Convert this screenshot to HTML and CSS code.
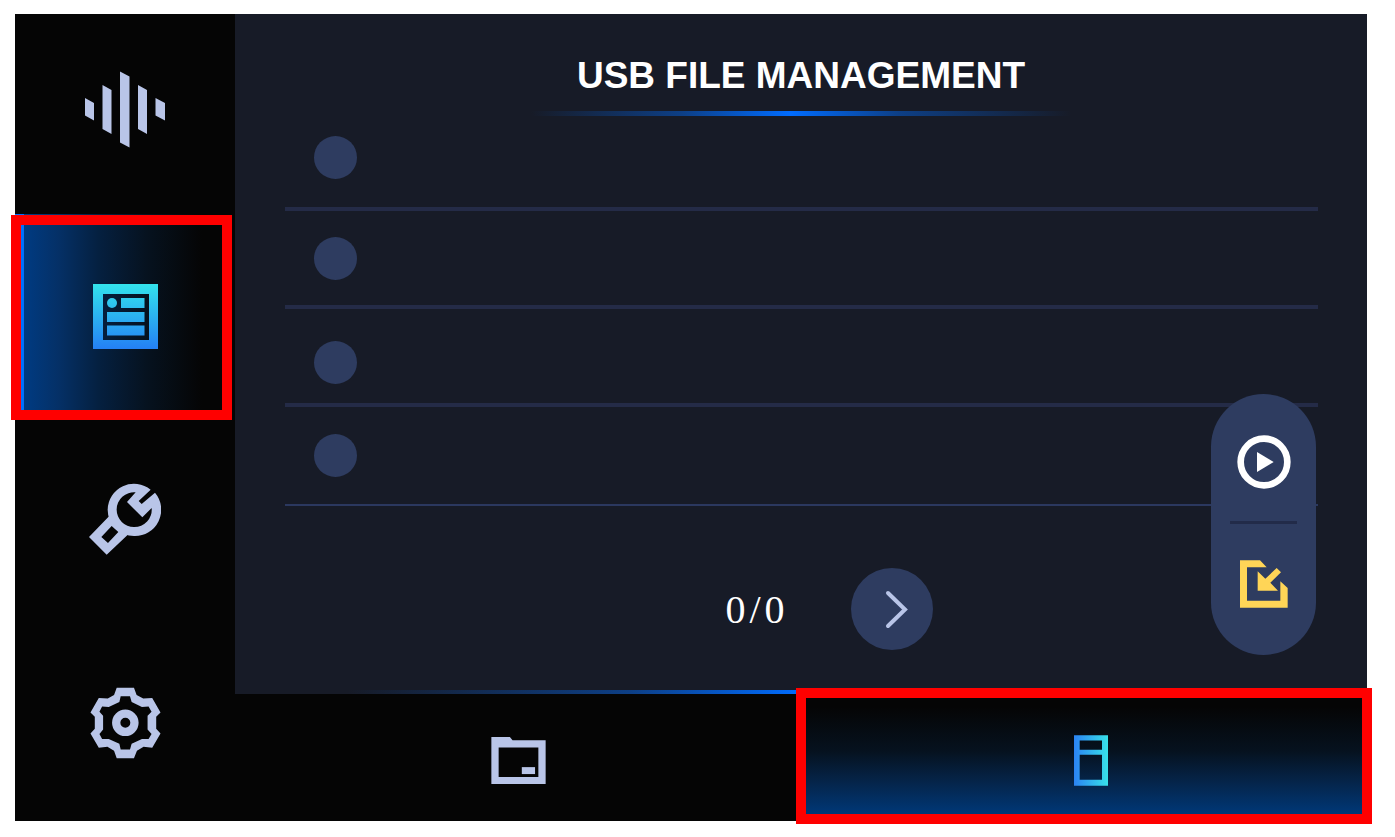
FILE: index.html
```
<!DOCTYPE html>
<html lang="en">
<head>
    <meta charset="UTF-8">
    <meta name="viewport" content="width=device-width, initial-scale=1.0">
    <title>USB File Management</title>
    <link rel="stylesheet" href="styles.css">
</head>
<body>
<div class="device">
    <nav class="sidebar" aria-label="Main">
        <button class="side-tab side-tab-audio" aria-label="Audio">
            <svg width="82" height="78" viewBox="84 71 82 78" fill="currentColor">
                <path d="M85 98l9 5v17.500l-9-5zM102.500 85l9 5v44l-9-5zM120 71.500l9.500 5v71l-9.500-5zM138 85l9 5v44l-9-5zM155.500 98l9.500 5v17.500l-9.500-5z"/>
            </svg>
        </button>
        <button class="side-tab side-tab-active" aria-label="Files">
            <svg width="65" height="65" viewBox="92 283 65 65" fill="url(#listFill)">
                <defs>
                    <linearGradient id="listFill" gradientUnits="userSpaceOnUse" x1="0" y1="283" x2="0" y2="348">
                        <stop offset="0" stop-color="#33e3ec"/>
                        <stop offset="1" stop-color="#2480f5"/>
                    </linearGradient>
                </defs>
                <path fill-rule="evenodd" d="M92 283h65v65H92zM102 293v46h46v-46z"/>
                <circle cx="111" cy="302" r="5"/>
                <path d="M120 297h23.500v10H120zM106 311h37.500v10H106zM106 324.500h37.500v10H106z"/>
            </svg>
            <span class="mark mark-side"></span>
        </button>
        <button class="side-tab" aria-label="Tools">
            <svg width="72" height="72" viewBox="55 68 216 216" fill="currentColor" fill-rule="evenodd">
                <path d="M240 88A79 79 0 0 0 111 148A79 79 0 0 0 190 227A79 79 0 0 0 253 97L213 131L204 122ZM195 96A52 52 0 0 0 138 148A52 52 0 0 0 190 200A52 52 0 0 0 243 143L215 171L169 125Z"/>
                <path d="M118 165L55 230L108 283L173 222ZM123 197L143 215L112 248L92 230Z"/>
            </svg>
        </button>
        <button class="side-tab" aria-label="Settings">
            <svg width="71" height="78" viewBox="58 50 213 235" fill="currentColor" fill-rule="evenodd">
                <path d="M138 67H190L198 89L218 100L245 98L270 142L257 155V191L270 205L245 248L219 245L199 257L190 280H138L130 257L110 245L84 248L59 205L72 191V155L59 142L84 98L111 100L130 89ZM150 93L146 110L114 125L94 124L86 140L97 152V193L86 207L94 222H114L146 236L150 253H178L183 236L214 222H234L243 207L231 193V152L243 140L234 124L214 125L183 110L178 93Z"/>
                <path d="M124 173a40 40 0 1 0 80 0a40 40 0 1 0 -80 0ZM149 173a15 15 0 1 0 30 0a15 15 0 1 0 -30 0Z"/>
            </svg>
        </button>
    </nav>

    <div class="content">
        <main class="panel">
            <h1 class="title">USB FILE MANAGEMENT</h1>
            <div class="title-line"></div>

            <ul class="files">
                <li class="file"><input type="checkbox" class="file-check" aria-label="Select file 1"></li>
                <li class="file"><input type="checkbox" class="file-check" aria-label="Select file 2"></li>
                <li class="file"><input type="checkbox" class="file-check" aria-label="Select file 3"></li>
                <li class="file"><input type="checkbox" class="file-check" aria-label="Select file 4"></li>
            </ul>

            <div class="pager">
                <span class="page-count">0<span class="slash">/</span>0</span>
                <button class="next" aria-label="Next page">
                    <svg width="82" height="82" viewBox="0 0 82 82" fill="none" stroke="#b9c5e8" stroke-width="4" stroke-linecap="round">
                        <path d="M37 25L54 41.500L37 58"/>
                    </svg>
                </button>
            </div>

            <div class="actions">
                <button class="action" aria-label="Play">
                    <svg width="54" height="54" viewBox="141 162 162 162" fill="#ffffff">
                        <circle cx="222" cy="243" r="70" fill="none" stroke="#ffffff" stroke-width="20"/>
                        <path d="M201 213L251 243L201 273Z"/>
                    </svg>
                </button>
                <div class="actions-line"></div>
                <button class="action" aria-label="Import">
                    <svg width="48" height="48" viewBox="152 536 144 144" fill="#ffd557">
                        <path d="M152 537H212L232 558H173V658H273V600L295 620V679H152Z"/>
                        <path d="M205 570L228 592L262 560L275 573L243 604L266 628H205Z"/>
                    </svg>
                </button>
            </div>
        </main>

        <nav class="tabs" aria-label="Storage">
            <button class="tab" aria-label="Internal storage">
                <svg width="55" height="47" viewBox="66 200 164 142" fill="currentColor">
                    <path fill-rule="evenodd" d="M66 200H122L130 210H230V342H66ZM88 232V321H208V232Z"/>
                    <path d="M158 291H198V312H158Z"/>
                </svg>
            </button>
            <button class="tab tab-active" aria-label="USB drive">
                <svg width="34" height="51" viewBox="134 196 102 152" fill="url(#usbFill)">
                    <defs>
                        <linearGradient id="usbFill">
                            <stop offset="0" stop-color="#2b83f4"/>
                            <stop offset="1" stop-color="#38e2ea"/>
                        </linearGradient>
                    </defs>
                    <path fill-rule="evenodd" d="M134 196H236V348H134ZM151 212V240H218V212ZM151 255V330H218V255Z"/>
                </svg>
                <span class="mark mark-tab"></span>
            </button>
        </nav>
    </div>
</div>
</body>
</html>
```
FILE: styles.css
```
* {
    box-sizing: border-box;
}
body {
    margin: 0;
    padding: 14px 28px 16px 15px;
    min-height: 100vh;
    display: flex;
    background-color: #ffffff;
    font-family: "Liberation Sans", Arial, sans-serif;
}
button {
    border: 0;
    padding: 0;
    background: none;
    color: #b9c5e8;
    cursor: pointer;
}
svg {
    display: block;
}
.device {
    flex: 1;
    display: flex;
    background-color: #050505;
}

/* left menu */
.sidebar {
    width: 220px;
    display: grid;
    grid-template-rows: 200fr 204fr 202fr 201fr;
}
.side-tab {
    position: relative;
    display: flex;
    align-items: center;
    justify-content: center;
}
.side-tab-audio {
    padding-bottom: 8px;
}
.side-tab-active {
    background: linear-gradient(to right, #0070ff 9px, #003b82 9px, #053066 20%, #052040 38%, #06121f 60%, #050505 85%);
}

/* red callout frames */
.mark {
    position: absolute;
    border: 10px solid #ff0000;
    pointer-events: none;
}
.mark-side {
    top: 1px;
    right: 3px;
    bottom: -2px;
    left: -4px;
}
.mark-tab {
    top: -6px;
    right: -5px;
    bottom: -3px;
    left: -5px;
}

.content {
    flex: 1;
    display: flex;
    flex-direction: column;
}
.panel {
    position: relative;
    flex: 1;
    padding-top: 38px;
    background-color: #171b27;
}
.title {
    margin: 0;
    font-size: 37px;
    line-height: 48px;
    text-align: center;
    color: #ffffff;
}
.title-line {
    width: 540px;
    height: 5px;
    margin: 11px auto 0;
    background: linear-gradient(to right, #171b27, #0d3f86 28%, #006cff 48%, #0d3f86 68%, #171b27);
}

.files {
    list-style: none;
    margin: 0 49px 0 50px;
    padding: 0;
}
.file {
    display: flex;
    align-items: center;
    height: 98px;
    padding-left: 29px;
    border-bottom: 4px solid #242b47;
}
.file:first-child {
    height: 95px;
    padding-bottom: 8px;
}
.file:nth-child(3) {
    padding-top: 12px;
}
.file:last-child {
    height: 99px;
    border-bottom: 2px solid #2b385f;
}
.file-check {
    appearance: none;
    width: 43px;
    height: 43px;
    margin: 0;
    border-radius: 50%;
    background-color: #2e3c60;
}

.pager {
    display: flex;
    align-items: center;
    justify-content: center;
    gap: 66px;
    padding: 62px 0 40px 56px;
}
.page-count {
    font-family: "Liberation Serif", "Times New Roman", serif;
    font-size: 40px;
    color: #ffffff;
}
.slash {
    padding: 0 4px;
}
.next {
    border-radius: 50%;
    background-color: #2e3c60;
}

/* floating buttons over the list */
.actions {
    position: absolute;
    right: 51px;
    bottom: 35px;
    width: 105px;
    height: 261px;
    padding: 8px 0 12px;
    display: flex;
    flex-direction: column;
    border-radius: 53px;
    background-color: #2e3c60;
}
.action {
    flex: 1;
    display: flex;
    align-items: center;
    justify-content: center;
}
.actions-line {
    height: 3px;
    margin: 0 19px;
    background-color: #222b49;
}

/* bottom tabs */
.tabs {
    display: grid;
    grid-template-columns: 1fr 1fr;
    border-top: 4px solid;
    border-image: linear-gradient(to right, #171b27 10%, #0d3f86 35%, #006cff 50%, #0d3f86 65%, #171b27 90%) 1;
}
.tab {
    position: relative;
    display: flex;
    align-items: center;
    justify-content: center;
    height: 127px;
    padding-top: 6px;
}
.tab-active {
    padding-left: 14px;
    background: linear-gradient(to bottom, #050505 10%, #06121f 45%, #05254b 70%, #003878 95%);
}
```
